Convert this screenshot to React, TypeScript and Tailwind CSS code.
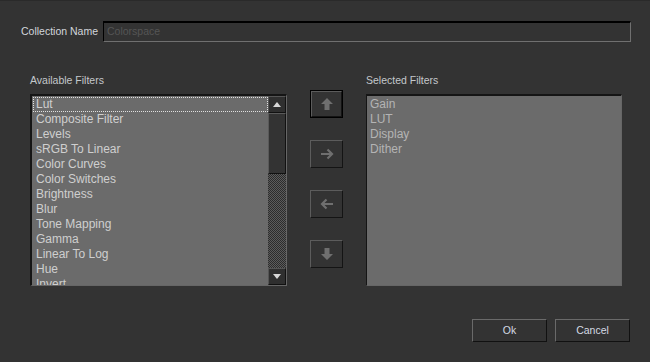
import React from "react";

const available = [
  "Lut",
  "Composite Filter",
  "Levels",
  "sRGB To Linear",
  "Color Curves",
  "Color Switches",
  "Brightness",
  "Blur",
  "Tone Mapping",
  "Gamma",
  "Linear To Log",
  "Hue",
  "Invert",
];

const selected = ["Gain", "LUT", "Display", "Dither"];

const font = { fontFamily: '"Liberation Sans", Arial, sans-serif' };

// Flèche épaisse (haut / bas)
const FatArrow: React.FC<{ down?: boolean }> = ({ down }) => (
  <svg width="14" height="14" viewBox="0 0 14 14" className={down ? "rotate-180" : ""}>
    <path d="M7 1 L13 7 L9.5 7 L9.5 13 L4.5 13 L4.5 7 L1 7 Z" fill="#6f6f6f" />
  </svg>
);

// Flèche fine (gauche / droite)
const ThinArrow: React.FC<{ left?: boolean }> = ({ left }) => (
  <svg width="14" height="12" viewBox="0 0 14 12" className={left ? "rotate-180" : ""}>
    <path d="M1 6 H12 M7.5 1.5 L12 6 L7.5 10.5" stroke="#6f6f6f" strokeWidth="2.2" fill="none" />
  </svg>
);

const MoveButton: React.FC<{ focused?: boolean; children: React.ReactNode }> = ({ focused, children }) => (
  <div
    className={
      focused
        ? "w-[33px] h-[28px] border border-black flex"
        : "w-[33px] h-[28px] flex"
    }
  >
    <div className="flex-1 flex items-center justify-center border-t border-l border-[#5c5c5c] border-r border-b border-r-[#141414] border-b-[#141414] bg-[#333333]">
      {children}
    </div>
  </div>
);

const DialogButton: React.FC<{ label: string }> = ({ label }) => (
  <div className="w-[75px] h-[23px] flex items-center justify-center border-t border-l border-[#6a6a6a] border-r border-b border-r-[#111] border-b-[#111] text-[10.5px] text-[#d4dae4]">
    {label}
  </div>
);

export default function App() {
  return (
    <div
      className="w-[650px] h-[362px] bg-[#333333] border-t border-[#2a2a2a] flex flex-col overflow-hidden"
      style={font}
    >
      {/* Nom de la collection */}
      <div className="flex items-center mt-[20px] pl-[21px] pr-[19px]">
        <span className="text-[10.5px] text-[#d2d6dc] w-[82px] shrink-0 whitespace-nowrap">Collection Name</span>
        <div className="flex-1 h-[21px] border-t-2 border-l border-black border-r border-b border-r-[#707070] border-b-[#707070] flex items-center pl-[3px]">
          <span className="text-[10.5px] text-[#555555]">Colorspace</span>
        </div>
      </div>

      {/* Listes */}
      <div className="flex mt-[32px] pl-[30px]">
        <div className="flex flex-col w-[257px]">
          <span className="text-[10.5px] text-[#c4c8cc] h-[13px] leading-[13px] whitespace-nowrap">Available Filters</span>
          <div className="mt-[7px] h-[192px] border-t-2 border-l-2 border-[#151515] border-r border-b border-r-[#666] border-b-[#666] flex">
            <div className="flex-1 bg-[#6b6b6b] overflow-hidden pt-[1px] pl-[1px]">
              {available.map((item, i) => (
                <div
                  key={item}
                  className={
                    i === 0
                      ? "h-[15px] leading-[13px] text-[12px] text-[#cfcfcf] pl-[2px] border border-dotted border-[#e0e0e0]"
                      : "h-[15px] leading-[15px] text-[12px] text-[#cfcfcf] pl-[3px]"
                  }
                >
                  {item}
                </div>
              ))}
            </div>
            {/* Barre de défilement */}
            <div className="w-[18px] flex flex-col bg-[#222]">
              <div className="h-[17px] bg-[#2f2f2f] border border-[#111] border-t-[#555] border-l-[#555] flex items-center justify-center">
                <svg width="8" height="5" viewBox="0 0 8 5">
                  <path d="M0 5 L4 0 L8 5 Z" fill="#d8d8d8" />
                </svg>
              </div>
              <div className="h-[61px] bg-[#333333] border border-[#111] border-t-[#5a5a5a] border-l-[#5a5a5a]" />
              <div className="flex-1 bg-[repeating-conic-gradient(#5c5c5c_0%_25%,#2c2c2c_0%_50%)] bg-[length:2px_2px]" />
              <div className="h-[17px] bg-[#2f2f2f] border border-[#111] border-t-[#555] border-l-[#555] flex items-center justify-center">
                <svg width="8" height="5" viewBox="0 0 8 5">
                  <path d="M0 0 L8 0 L4 5 Z" fill="#d8d8d8" />
                </svg>
              </div>
            </div>
          </div>
        </div>

        {/* Boutons de déplacement */}
        <div className="flex flex-col ml-[23px] mt-[16px] gap-[22px]">
          <MoveButton focused>
            <FatArrow />
          </MoveButton>
          <MoveButton>
            <ThinArrow />
          </MoveButton>
          <MoveButton>
            <ThinArrow left />
          </MoveButton>
          <MoveButton>
            <FatArrow down />
          </MoveButton>
        </div>

        <div className="flex flex-col w-[256px] ml-[23px]">
          <span className="text-[10.5px] text-[#c4c8cc] h-[13px] leading-[13px] whitespace-nowrap">Selected Filters</span>
          <div className="mt-[7px] h-[192px] border-t-2 border-l border-[#151515] border-r border-b border-r-[#666] border-b-[#666] bg-[#6b6b6b] pt-[1px] pl-[3px]">
            {selected.map((item) => (
              <div key={item} className="h-[15px] leading-[15px] text-[12px] text-[#b4b4b4]">
                {item}
              </div>
            ))}
          </div>
        </div>
      </div>

      {/* Ok / Annuler */}
      <div className="flex justify-end gap-[8px] mt-[33px] pr-[20px]">
        <DialogButton label="Ok" />
        <DialogButton label="Cancel" />
      </div>
    </div>
  );
}
